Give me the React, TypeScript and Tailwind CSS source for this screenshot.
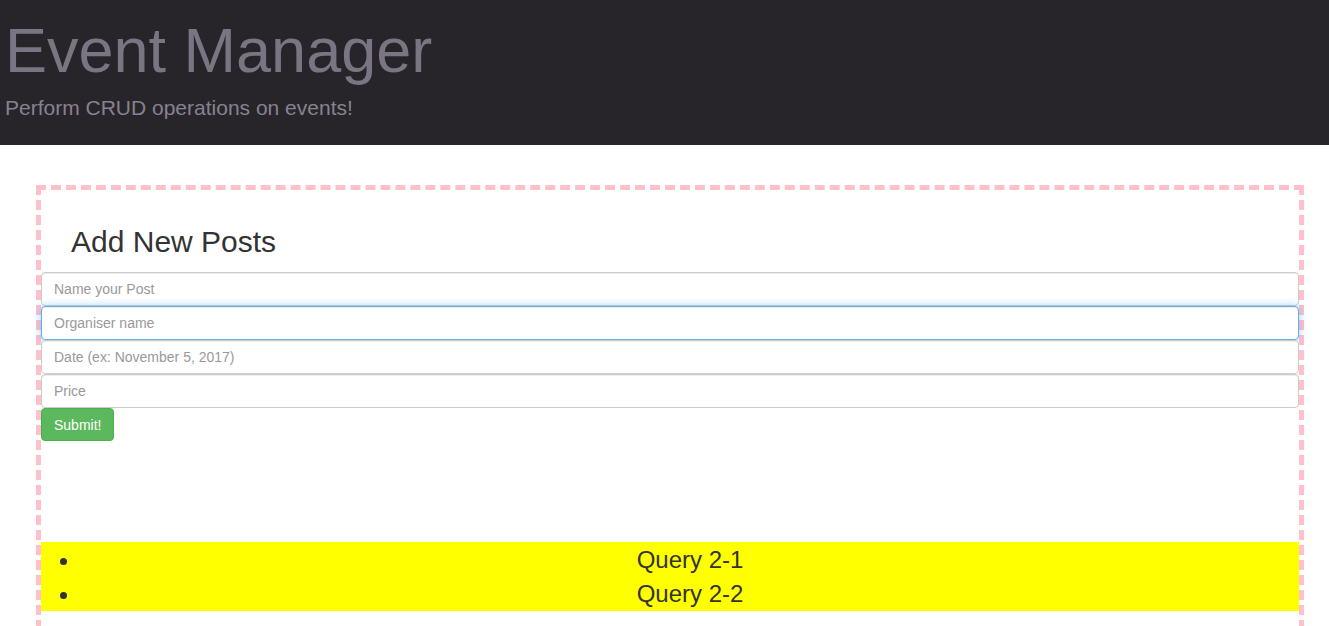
import { useState } from 'react';

const inputBase =
  "block w-full h-[34px] px-3 py-[6px] text-[14px] text-[#555] bg-white border border-[#ccc] rounded-[4px] shadow-[inset_0_1px_1px_rgba(0,0,0,0.075)] placeholder:text-[#999] outline-none focus:border-[#66afe9] focus:shadow-[inset_0_1px_1px_rgba(0,0,0,0.075),0_0_8px_rgba(102,175,233,0.6)]";

export default function App() {
  const [form, setForm] = useState({ title: '', organiser: '', date: '', price: '' });

  return (
    <div className="min-h-[626px] bg-white text-[#333] font-['Liberation_Sans',Arial,sans-serif]">
      {/* Jumbotron */}
      <header className="h-[145px] bg-[#27252a] pl-[5px] pt-[16px]">
        <h1 className="text-[63px] leading-[1.1] text-[#7b7483]">Event Manager</h1>
        <p className="mt-[8px] text-[21px] leading-[30px] text-[#898191]">Perform CRUD operations on events!</p>
      </header>

      <main className="pt-[40px]">
        <div className="ml-[36px] w-[1268px] min-h-[460px] border-[5px] border-dashed border-[#ffc0cb]">
          <h2 className="pl-[30px] pt-[35px] text-[30px] leading-[1.1] text-[#333]">Add New Posts</h2>

          <form className="mt-[14px]" onSubmit={(e) => e.preventDefault()}>
            <input
              className={inputBase}
              placeholder="Name your Post"
              value={form.title}
              onChange={(e) => setForm({ ...form, title: e.target.value })}
            />
            <input
              autoFocus
              className={inputBase + " border-[#66afe9] shadow-[inset_0_1px_1px_rgba(0,0,0,0.075),0_0_8px_rgba(102,175,233,0.6)]"}
              placeholder="Organiser name"
              value={form.organiser}
              onChange={(e) => setForm({ ...form, organiser: e.target.value })}
            />
            <input
              className={inputBase}
              placeholder="Date (ex: November 5, 2017)"
              value={form.date}
              onChange={(e) => setForm({ ...form, date: e.target.value })}
            />
            <input
              className={inputBase}
              placeholder="Price"
              value={form.price}
              onChange={(e) => setForm({ ...form, price: e.target.value })}
            />
            <button
              type="submit"
              className="h-[33px] px-3 text-[14px] leading-[20px] text-white bg-[#5cb85c] border border-[#4cae4c] rounded-[4px]"
            >
              Submit!
            </button>
          </form>

          <ul className="mt-[101px] bg-[#ffff00] list-disc pl-[40px] pt-[1px] text-[24px] leading-[34px] text-[#333] text-center">
            <li>Query 2-1</li>
            <li>Query 2-2</li>
          </ul>
        </div>
      </main>
    </div>
  );
}
